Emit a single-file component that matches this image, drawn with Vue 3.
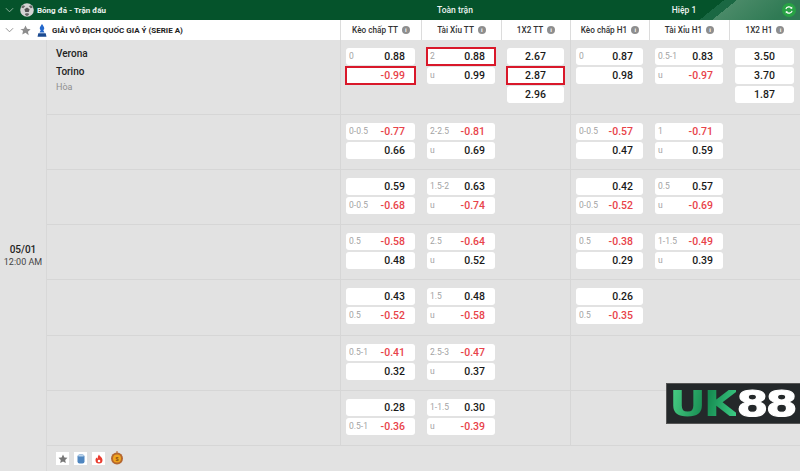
<script setup>
const headers = ['Kèo chấp TT', 'Tài Xỉu TT', '1X2 TT', 'Kèo chấp H1', 'Tài Xỉu H1', '1X2 H1']
const p = (l, v, hot) => ({ l, v, hot })
const rows = [
  { h: 75, team: true, cells: [
    [p('0', '0.88'), p('', '-0.99', 1)],
    [p('2', '0.88', 1), p('u', '0.99')],
    [p('', '2.67'), p('', '2.87', 1), p('', '2.96')],
    [p('0', '0.87'), p('', '0.98')],
    [p('0.5-1', '0.83'), p('u', '-0.97')],
    [p('', '3.50'), p('', '3.70'), p('', '1.87')]
  ] },
  { h: 55, cells: [
    [p('0-0.5', '-0.77'), p('', '0.66')], [p('2-2.5', '-0.81'), p('u', '0.69')], [],
    [p('0-0.5', '-0.57'), p('', '0.47')], [p('1', '-0.71'), p('u', '0.59')], []
  ] },
  { h: 55, cells: [
    [p('', '0.59'), p('0-0.5', '-0.68')], [p('1.5-2', '0.63'), p('u', '-0.74')], [],
    [p('', '0.42'), p('0-0.5', '-0.52')], [p('0.5', '0.57'), p('u', '-0.69')], []
  ] },
  { h: 55, cells: [
    [p('0.5', '-0.58'), p('', '0.48')], [p('2.5', '-0.64'), p('u', '0.52')], [],
    [p('0.5', '-0.38'), p('', '0.29')], [p('1-1.5', '-0.49'), p('u', '0.39')], []
  ] },
  { h: 56, cells: [
    [p('', '0.43'), p('0.5', '-0.52')], [p('1.5', '0.48'), p('u', '-0.58')], [],
    [p('', '0.26'), p('0.5', '-0.35')], [], []
  ] },
  { h: 55, cells: [
    [p('0.5-1', '-0.41'), p('', '0.32')], [p('2.5-3', '-0.47'), p('u', '0.37')], [], [], [], []
  ] },
  { h: 55, cells: [
    [p('', '0.28'), p('0.5-1', '-0.36')], [p('1-1.5', '0.30'), p('u', '-0.39')], [], [], [], []
  ] }
]
</script>

<template>
  <div class="page">
    <header class="topbar">
      <div class="top-left">
        <svg class="chev" viewBox="0 0 10 6"><path d="M1 1l4 4 4-4" fill="none" stroke="#9fc0ac" stroke-width="1"/></svg>
        <svg class="ball" viewBox="0 0 16 16">
          <circle cx="8" cy="8" r="7.8" fill="#d4d4d4"/>
          <path d="M8 5l3 2-1 3.4H6L5 7z" fill="#555"/>
          <path d="M3 2.5l3 .8-2.2 2.6-2.2-.4zM13 2.5l-3 .8 2.2 2.6 2.2-.4zM5.5 13l2.5 2 2.5-2-1-1.4h-3z" fill="#666"/>
        </svg>
        <span class="sport">Bóng đá - Trận đấu</span>
      </div>
      <div class="top-mid">Toàn trận</div>
      <div class="top-right">
        <span>Hiệp 1</span>
        <span class="refresh">
          <svg viewBox="0 0 12 12"><path d="M2.2 5a4 4 0 0 1 7-1.2M9.8 7a4 4 0 0 1-7 1.2" fill="none" stroke="#fff" stroke-width="1.3"/><path d="M9.9 1.8v2.7H7.3zM2.1 10.2V7.5h2.6z" fill="#fff"/></svg>
        </span>
      </div>
    </header>

    <div class="subbar">
      <div class="league">
        <svg class="chev" viewBox="0 0 10 6"><path d="M1 1l4 4 4-4" fill="none" stroke="#888" stroke-width="1"/></svg>
        <svg class="star" viewBox="0 0 12 12"><path d="M6 .6l1.7 3.6 3.9.5-2.9 2.7.8 3.9L6 8.4l-3.5 1.9.8-3.9L.4 4.7l3.9-.5z" fill="#8d8d8d"/></svg>
        <svg class="cup" viewBox="0 0 10 14"><path d="M5 0c1 1.6 2.4 3 2.4 4.6 0 1-.5 1.6-1 2l1.3 2.6H2.3l1.3-2.6c-.5-.4-1-1-1-2C2.6 3 4 1.6 5 0z" fill="#2468cc"/><path d="M1 10h8l.8 3.6H.2z" fill="#1b4a90"/></svg>
        <span class="league-name">GIẢI VÔ ĐỊCH QUỐC GIA Ý (SERIE A)</span>
      </div>
      <div v-for="h in headers" :key="h" class="col-head">
        <span>{{ h }}</span><i class="info">i</i>
      </div>
    </div>

    <div class="body">
      <div class="date"><span>05/01</span><span>12:00 AM</span></div>
      <div class="rows">
        <div v-for="(row, i) in rows" :key="i" class="row" :style="{ height: row.h + 'px' }">
          <div class="teams">
            <template v-if="row.team">
              <div class="team">Verona</div>
              <div class="team">Torino</div>
              <div class="draw">Hòa</div>
            </template>
          </div>
          <div v-for="(cell, c) in row.cells" :key="c" class="cell" :class="{ wide: c === 2 || c === 5, ruled: c === 0 || c === 3 }">
            <div v-for="(o, k) in cell" :key="k" class="odd" :class="{ hot: o.hot }">
              <span class="line">{{ o.l }}</span>
              <span class="val" :class="{ neg: o.v.startsWith('-') }">{{ o.v }}</span>
            </div>
          </div>
        </div>
        <div class="foot">
          <span class="fi"><svg viewBox="0 0 12 12"><path d="M6 1.5l1.4 2.9 3.1.4-2.3 2.2.6 3.1L6 8.6l-2.8 1.5.6-3.1-2.3-2.2 3.1-.4z" fill="#777"/></svg></span>
          <span class="fi"><svg viewBox="0 0 12 12"><rect x="2.5" y="1.5" width="7" height="9" rx="2" fill="#4f86c0"/><rect x="3" y="2" width="6" height="1.6" rx=".8" fill="#bcd3ea"/></svg></span>
          <span class="fi"><svg viewBox="0 0 12 12"><path d="M6 1.5c.5 1.8 3.5 2.8 3.5 5.6a3.5 3.5 0 0 1-7 0c0-1.2.6-2 1.2-2.6.1.7.5 1.1.9 1.3C4.7 4.2 5.1 2.8 6 1.5z" fill="#ea3b2e"/><circle cx="6" cy="8" r="1.3" fill="#fff"/></svg></span>
          <span class="fc"><svg viewBox="0 0 14 14"><circle cx="7" cy="7.6" r="6" fill="#b5672f"/><circle cx="7" cy="7.6" r="4" fill="#f0a51e"/><path d="M7 0v2" stroke="#b5672f"/><text x="7" y="9.6" text-anchor="middle" font-size="5.5" font-family="Liberation Sans" font-weight="700" fill="#8a4b12">$</text></svg></span>
        </div>
      </div>
    </div>

    <div class="brand"><span class="mark"><span class="uk">UK</span><span class="n88">88</span></span></div>
  </div>
</template>

<style scoped>
.page {
  position: relative;
  width: 800px;
  height: 471px;
  overflow: hidden;
  background: #e2e2e2;
  font-family: Roboto, "Liberation Sans", Arial, sans-serif;
  color: #1b1b1b;
}
.topbar {
  display: grid;
  grid-template-columns: 340px 230px 230px;
  height: 20px;
  color: #eef5f1;
  background: #05532b;
  font-size: 8.5px;
  font-weight: 500;
  align-items: center;
}
.top-left { display: flex; align-items: center; height: 100%; padding-left: 5px; gap: 5px; }
.top-mid { text-align: center; line-height: 20px; height: 100%; }
.top-right {
  position: relative;
  display: flex;
  align-items: center;
  justify-content: center;
  height: 100%;
  padding-right: 2px;
  background: linear-gradient(141deg, #05532b 0 97px, #1a6843 97px 105px, #4a8a68 105px, #2f7a54 144px);
}
.refresh {
  position: absolute;
  right: 4px;
  top: 3px;
  width: 14px;
  height: 14px;
  border-radius: 50%;
  background: #27a244;
  display: flex;
  align-items: center;
  justify-content: center;
}
.refresh svg { width: 10px; height: 10px; }
.chev { width: 9px; height: 6px; flex: none; }
.ball { width: 14px; height: 14px; margin-left: 1px; }
.sport { margin-left: -2px; font-size: 8px; font-weight: 700; }
.subbar {
  display: grid;
  grid-template-columns: 340px 81px 80px 69px 79px 80px 71px;
  height: 20px;
  background: #fff;
}
.league { display: flex; align-items: center; padding-left: 5px; }
.star { width: 11px; height: 11px; margin-left: 6px; }
.cup { width: 10px; height: 13px; margin-left: 6px; }
.league-name { margin-left: 5px; font-size: 8px; font-weight: 700; color: #222; white-space: nowrap; }
.col-head {
  display: flex;
  align-items: center;
  justify-content: center;
  gap: 4px;
  border-left: 1px solid #dcdcdc;
  font-size: 8.2px;
  font-weight: 500;
  color: #333;
  box-sizing: border-box;
}
.info {
  width: 8px;
  height: 8px;
  border-radius: 50%;
  background: #8e8e8e;
  color: #fff;
  font: 700 6px/8px "Liberation Sans", sans-serif;
  text-align: center;
}
.body { display: flex; }
.date {
  width: 47px;
  height: 431px;
  flex: none;
  display: flex;
  flex-direction: column;
  justify-content: center;
  align-items: center;
  gap: 2px;
  font-size: 9px;
  line-height: 11px;
  color: #444;
  box-sizing: border-box;
  border-right: 1px solid #d8d8d8;
}
.date span:first-child { font-size: 10px; font-weight: 500; color: #222; }
.rows { flex: 1; }
.row {
  display: grid;
  grid-template-columns: 293px 81px 80px 69px 79px 80px 71px;
  box-sizing: border-box;
  border-bottom: 1px solid #d6d6d6;
}
.teams { padding: 5px 0 0 9px; }
.team { font-size: 10px; font-weight: 500; line-height: 17.5px; color: #222; }
.draw { font-size: 9px; line-height: 14px; color: #8f8f8f; }
.cell {
  padding: 8px 6px 0 6px;
  display: flex;
  flex-direction: column;
  gap: 2.5px;
  box-sizing: border-box;
}
.ruled { border-left: 1px solid #d6d6d6; padding-left: 5px; }
.odd {
  position: relative;
  height: 16.5px;
  background: #fff;
  border-radius: 3px;
  display: flex;
  align-items: center;
  justify-content: space-between;
  padding: 0 10px 0 3px;
  font-size: 10.5px;
}
.wide .odd { justify-content: center; padding: 0; }
.wide .line { display: none; }
.line { font-size: 8.5px; color: #a3a3a3; }
.val { font-weight: 500; color: #1a1a1a; }
.val.neg { color: #e8434a; }
.hot { outline: 2px solid #d9182a; outline-offset: -1px; border-radius: 0; }
.foot { height: 25px; display: flex; align-items: flex-start; gap: 5px; padding: 6px 0 0 9px; box-sizing: border-box; }
.fi { width: 13px; height: 13px; background: #fff; display: flex; align-items: center; justify-content: center; }
.fi svg { width: 12px; height: 12px; }
.fc svg { width: 14px; height: 14px; display: block; margin-top: -1px; }
.brand {
  position: absolute;
  left: 666px;
  top: 383px;
  width: 134px;
  height: 41px;
  background: #24282a;
  border: 1px solid #555;
  border-right: 0;
  box-sizing: border-box;
  display: flex;
  align-items: center;
  padding-left: 2px;
  overflow: hidden;
}
.mark {
  display: inline-block;
  font: 700 36px/39px "DejaVu Sans", sans-serif;
  letter-spacing: -2px;
  white-space: nowrap;
  transform: scaleX(1.27);
  transform-origin: left center;
}
.uk {
  background: linear-gradient(100deg, #4ed58a, #158a50 55%, #3fd088);
  -webkit-background-clip: text;
  background-clip: text;
  color: transparent;
}
.n88 { color: #fff; -webkit-text-stroke: 1px #fff; }
</style>
